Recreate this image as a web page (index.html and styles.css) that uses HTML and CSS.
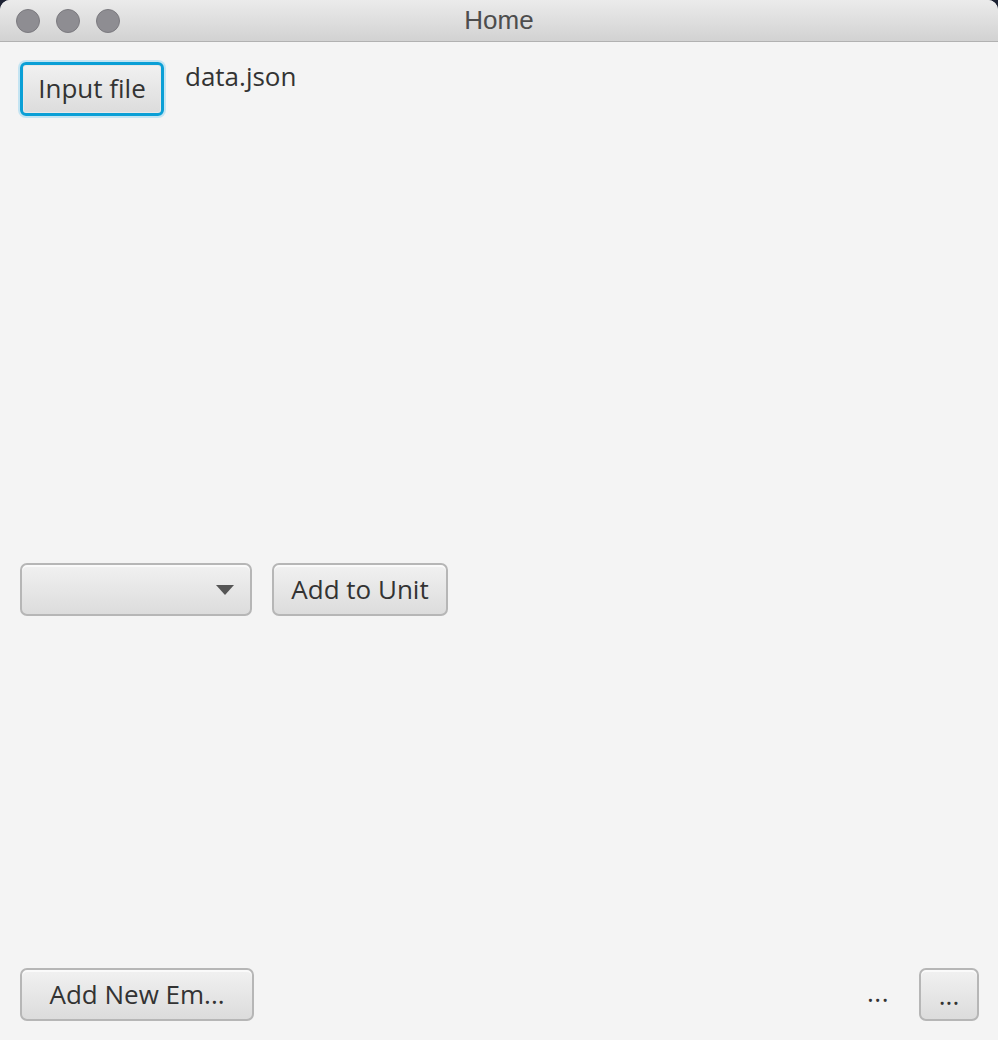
FILE: index.html
```html
<!DOCTYPE html>
<html>
<head>
<meta charset="utf-8">
<title>Home</title>
<link rel="stylesheet" href="styles.css">
</head>
<body>
<div class="window">
  <div class="titlebar">
    <div class="lights">
      <span class="light"></span>
      <span class="light"></span>
      <span class="light"></span>
    </div>
    <div class="title">Home</div>
  </div>
  <div class="content">
    <div class="row top-row">
      <button class="btn focused input-btn">Input file</button>
      <span class="label file-label">data.json</span>
    </div>
    <div class="row mid-row">
      <div class="combo"><span class="arrow"></span></div>
      <button class="btn unit-btn">Add to Unit</button>
    </div>
    <div class="row bottom-row">
      <button class="btn new-btn">Add New Em...</button>
      <div class="spacer"></div>
      <span class="label dots-label">...</span>
      <button class="btn dots-btn">...</button>
    </div>
  </div>
</div>
</body>
</html>
```
FILE: styles.css
```css
html, body {
  margin: 0;
  padding: 0;
  background: #1d2233;
}
.window {
  width: 998px;
  height: 1040px;
  background: #f4f4f4;
  border-radius: 10px 10px 0 0;
  overflow: hidden;
  display: flex;
  flex-direction: column;
  font-family: "Open Sans", "Liberation Sans", sans-serif;
  color: #333;
}
.titlebar {
  height: 41px;
  flex: none;
  background: linear-gradient(#ebebeb, #d2d2d2);
  border-bottom: 1px solid #b1b1b1;
  position: relative;
  display: flex;
  align-items: center;
}
.lights {
  display: flex;
  gap: 16px;
  padding-left: 16px;
}
.light {
  width: 22px;
  height: 22px;
  border-radius: 50%;
  background: #8e8d92;
  border: 1px solid #7b7a7f;
}
.title {
  position: absolute;
  left: 0;
  right: 0;
  top: 0;
  height: 41px;
  line-height: 41px;
  text-align: center;
  font-family: "Liberation Sans", Arial, sans-serif;
  font-size: 26px;
  color: #4d4d4d;
}
.content {
  flex: 1;
  display: flex;
  flex-direction: column;
  padding: 20px 19px 19px 20px;
}
.row {
  display: flex;
  align-items: center;
}
.top-row {
  align-items: flex-start;
  gap: 21px;
}
.mid-row {
  margin-top: 447px;
  gap: 20px;
}
.bottom-row {
  margin-top: auto;
}
.spacer {
  flex: 1;
}
.btn {
  font-family: "Open Sans", "Liberation Sans", sans-serif;
  font-size: 26px;
  color: #333;
  height: 53px;
  box-sizing: border-box;
  border: 2px solid #b6b6b6;
  border-radius: 7px;
  background: linear-gradient(#f1f1f1, #dcdcdc);
  box-shadow: inset 0 2px 0 #fafafa;
  padding: 0 16px;
  margin: 0;
  line-height: 1;
}
.btn.focused {
  border: 3px solid #0a9fd6;
  box-shadow: 0 0 0 2px #c4e4f2, inset 0 0 0 1px #e8e8e8;
  height: 54px;
  border-radius: 6px;
}
.input-btn {
  width: 144px;
  padding: 0 0 2px;
}
.label {
  font-size: 26px;
  line-height: 32px;
}
.file-label {
  margin-top: -2px;
}
.combo {
  width: 232px;
  height: 53px;
  box-sizing: border-box;
  border: 2px solid #b6b6b6;
  border-radius: 7px;
  background: linear-gradient(#f1f1f1, #dcdcdc);
  box-shadow: inset 0 2px 0 #fafafa;
  display: flex;
  align-items: center;
  justify-content: flex-end;
  padding-right: 16px;
}
.arrow {
  width: 0;
  height: 0;
  border-left: 9px solid transparent;
  border-right: 9px solid transparent;
  border-top: 10px solid #555;
}
.unit-btn {
  width: 176px;
  padding: 0 0 2px;
}
.new-btn {
  width: 234px;
  padding: 0 0 2px;
}
.dots-label {
  margin-right: 30px;
  margin-top: -6px;
  letter-spacing: 0.5px;
}
.dots-btn {
  width: 60px;
  padding: 0;
}
```
